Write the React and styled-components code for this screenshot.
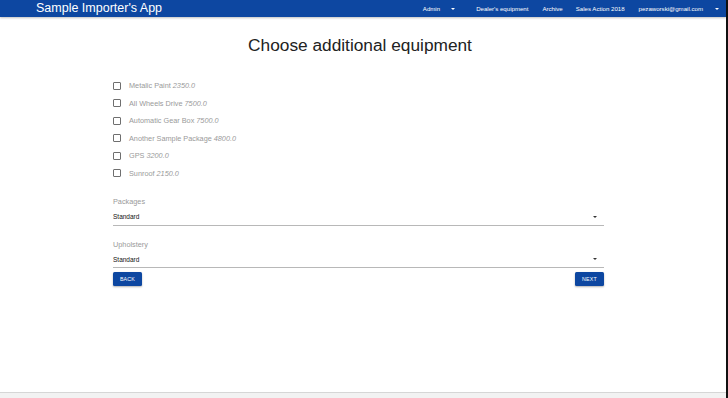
import styled, { createGlobalStyle } from "styled-components"

const GlobalStyle = createGlobalStyle`
  html, body {
    margin: 0;
    padding: 0;
    background: #ffffff;
    font-family: "Liberation Sans", Arial, sans-serif;
  }
`;

const Frame = styled.div`
  display: flex;
  width: 728px;
  height: 398px;
  overflow: hidden;
`;

const Page = styled.div`
  flex: 1;
  display: flex;
  flex-direction: column;
  min-width: 0;
`;

const Edge = styled.div`
  width: 2px;
  background-color: #111111;
`;

const AppBar = styled.header`
  height: 17px;
  background-color: #0d47a1;
  display: flex;
  align-items: center;
  padding: 0 7px 0 36px;
  color: #ffffff;
  box-shadow: 0 1px 2px rgba(0, 0, 0, 0.25);
  position: relative;
  z-index: 1;
`;

const Brand = styled.div`
  font-size: 12.5px;
  flex: 1;
  line-height: 17px;
`;

const Nav = styled.nav`
  display: flex;
  align-items: center;
  font-size: 6.1px;
`;

const NavItem = styled.span`
  display: flex;
  align-items: center;
  margin-left: ${props => props.gap || 13}px;
  white-space: nowrap;
`;

const Caret = styled.span`
  width: 0;
  height: 0;
  border-left: 2.5px solid transparent;
  border-right: 2.5px solid transparent;
  border-top: 2.5px solid ${props => props.color || "#ffffff"};
  margin-left: ${props => props.gap || 8}px;
`;

const Main = styled.main`
  flex: 1;
  display: flex;
  flex-direction: column;
  padding-right: 6px;
`;

const Heading = styled.h1`
  margin: 18px 0 0;
  text-align: center;
  font-size: 17.3px;
  font-weight: 400;
  color: #222222;
  line-height: 20px;
`;

const Form = styled.div`
  width: 491px;
  margin: 22px 0 0 113px;
  display: flex;
  flex-direction: column;
`;

const CheckList = styled.div`
  display: flex;
  flex-direction: column;
`;

const CheckRow = styled.label`
  display: flex;
  align-items: center;
  height: 17.5px;
  font-size: 7.3px;
  color: #9a9a9a;
`;

const Box = styled.span`
  width: 6px;
  height: 6px;
  border: 1.2px solid #6f6f6f;
  border-radius: 1px;
  margin-right: 8px;
`;

const Price = styled.i`
  margin-left: 2px;
`;

const Field = styled.div`
  display: flex;
  flex-direction: column;
  margin-top: ${props => props.top}px;
`;

const FieldLabel = styled.div`
  font-size: 7.3px;
  color: #9a9a9a;
  line-height: 9px;
`;

const Select = styled.div`
  display: flex;
  align-items: center;
  justify-content: space-between;
  margin-top: 6px;
  padding: 0 7px 3.5px 0;
  height: 9px;
  font-size: 6.5px;
  color: #111111;
  border-bottom: 1px solid rgba(0, 0, 0, 0.28);
`;

const Actions = styled.div`
  display: flex;
  justify-content: space-between;
  margin-top: 4px;
`;

const Button = styled.button`
  width: 29px;
  height: 14px;
  padding: 0;
  border: none;
  border-radius: 1.5px;
  background-color: #0d47a1;
  color: #ffffff;
  font-family: inherit;
  font-size: 5.3px;
  font-weight: 500;
  letter-spacing: 0.2px;
  box-shadow: 0 1px 2px rgba(0, 0, 0, 0.3);
  cursor: pointer;
`;

const Footer = styled.footer`
  height: 5px;
  background-color: #f2f2f2;
  border-top: 1px solid #d6d6d6;
`;

const equipment = [
  ["Metalic Paint", "2350.0"],
  ["All Wheels Drive", "7500.0"],
  ["Automatic Gear Box", "7500.0"],
  ["Another Sample Package", "4800.0"],
  ["GPS", "3200.0"],
  ["Sunroof", "2150.0"],
];

export const App = () => {
  return (
    <>
      <GlobalStyle />
      <Frame>
        <Page>
          <AppBar>
            <Brand>Sample Importer's App</Brand>
            <Nav>
              <NavItem>Admin<Caret gap={11} /></NavItem>
              <NavItem gap={21}>Dealer's equipment</NavItem>
              <NavItem gap={14}>Archive</NavItem>
              <NavItem>Sales Action 2018</NavItem>
              <NavItem gap={14}>pezaworski@gmail.com<Caret gap={12} /></NavItem>
            </Nav>
          </AppBar>
          <Main>
            <Heading>Choose additional equipment</Heading>
            <Form>
              <CheckList>
                {equipment.map(([name, price]) => (
                  <CheckRow key={name}>
                    <Box />
                    {name}
                    <Price>{price}</Price>
                  </CheckRow>
                ))}
              </CheckList>
              <Field top={15}>
                <FieldLabel>Packages</FieldLabel>
                <Select>Standard<Caret color="#333" gap={0} /></Select>
              </Field>
              <Field top={14}>
                <FieldLabel>Upholstery</FieldLabel>
                <Select>Standard<Caret color="#333" gap={0} /></Select>
              </Field>
              <Actions>
                <Button>BACK</Button>
                <Button>NEXT</Button>
              </Actions>
            </Form>
          </Main>
          <Footer />
        </Page>
        <Edge />
      </Frame>
    </>
  )
}

export default App
